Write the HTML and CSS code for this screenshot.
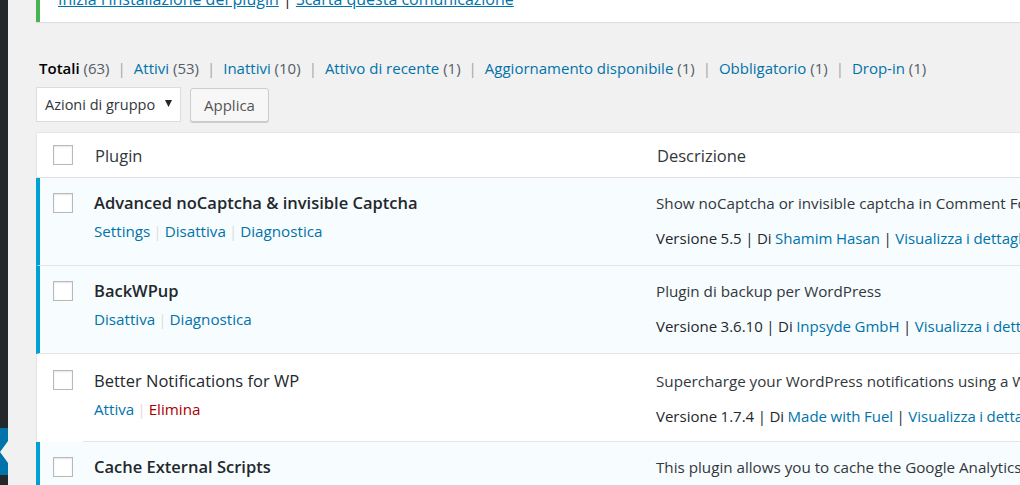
FILE: index.html
```html
<!DOCTYPE html>
<html lang="it">
<head>
<meta charset="utf-8">
<title>Plugin</title>
<link rel="stylesheet" href="styles.css">
</head>
<body>
<div class="layout">
  <aside class="sidebar">
    <div class="side-spacer"></div>
    <div class="side-current"><span class="side-arrow"></span></div>
    <div class="side-rest"></div>
  </aside>
  <main class="main">
    <div class="notice">
      <a href="#">Inizia l'installazione del plugin</a> | <a href="#">Scarta questa comunicazione</a>
    </div>

    <ul class="filters">
      <li><span class="current">Totali</span> <span class="count">(63)</span><span class="sep">|</span></li>
      <li><a href="#">Attivi <span class="count">(53)</span></a><span class="sep">|</span></li>
      <li><a href="#">Inattivi <span class="count">(10)</span></a><span class="sep">|</span></li>
      <li><a href="#">Attivo di recente <span class="count">(1)</span></a><span class="sep">|</span></li>
      <li><a href="#">Aggiornamento disponibile <span class="count">(1)</span></a><span class="sep">|</span></li>
      <li><a href="#">Obbligatorio <span class="count">(1)</span></a><span class="sep">|</span></li>
      <li><a href="#">Drop-in <span class="count">(1)</span></a></li>
    </ul>

    <div class="bulk">
      <div class="select">
        <span>Azioni di gruppo</span>
        <svg class="caret" width="7" height="7" viewBox="0 0 7 7"><path d="M0 0 H7 L3.5 7 Z" fill="#23282d"/></svg>
      </div>
      <button class="btn">Applica</button>
    </div>

    <div class="table">
      <div class="row head">
        <div class="cell check"><span class="cb"></span></div>
        <div class="cell name"><span class="th">Plugin</span></div>
        <div class="cell desc"><span class="th">Descrizione</span></div>
      </div>

      <div class="row active">
        <div class="cell check"><span class="cb"></span></div>
        <div class="cell name">
          <strong class="title">Advanced noCaptcha &amp; invisible Captcha</strong>
          <div class="actions"><a href="#">Settings</a><span class="asep">|</span><a href="#">Disattiva</a><span class="asep">|</span><a href="#">Diagnostica</a></div>
        </div>
        <div class="cell desc">
          <p class="dtext">Show noCaptcha or invisible captcha in Comment Form, Login Form, Register Form</p>
          <p class="ver">Versione 5.5 | Di <a href="#">Shamim Hasan</a> | <a href="#">Visualizza i dettagli</a></p>
        </div>
      </div>

      <div class="row active">
        <div class="cell check"><span class="cb"></span></div>
        <div class="cell name">
          <strong class="title">BackWPup</strong>
          <div class="actions"><a href="#">Disattiva</a><span class="asep">|</span><a href="#">Diagnostica</a></div>
        </div>
        <div class="cell desc">
          <p class="dtext">Plugin di backup per WordPress</p>
          <p class="ver">Versione 3.6.10 | Di <a href="#">Inpsyde GmbH</a> | <a href="#">Visualizza i dettagli</a></p>
        </div>
      </div>

      <div class="row inactive">
        <div class="cell check"><span class="cb"></span></div>
        <div class="cell name">
          <span class="title">Better Notifications for WP</span>
          <div class="actions"><a href="#">Attiva</a><span class="asep">|</span><a href="#" class="delete">Elimina</a></div>
        </div>
        <div class="cell desc">
          <p class="dtext">Supercharge your WordPress notifications using a WYSIWYG editor and shortcodes.</p>
          <p class="ver">Versione 1.7.4 | Di <a href="#">Made with Fuel</a> | <a href="#">Visualizza i dettagli</a></p>
        </div>
      </div>

      <div class="row active">
        <div class="cell check"><span class="cb"></span></div>
        <div class="cell name">
          <strong class="title">Cache External Scripts</strong>
          <div class="actions"><a href="#">Disattiva</a></div>
        </div>
        <div class="cell desc">
          <p class="dtext">This plugin allows you to cache the Google Analytics JavaScript file</p>
          <p class="ver">Versione 0.4 | Di <a href="#">Diego Voors</a></p>
        </div>
      </div>
    </div>
  </main>
</div>
</body>
</html>
```

FILE: styles.css
```css
html, body {
  margin: 0;
  padding: 0;
  height: 100%;
  overflow: hidden;
}
body {
  font-family: "Open Sans", "Noto Sans", sans-serif;
  font-size: 15px;
  color: #23282d;
  background: #f1f1f1;
}
a { color: #0073aa; text-decoration: none; }

.layout {
  display: flex;
  height: 485px;
}

.sidebar {
  width: 8px;
  flex: 0 0 8px;
  display: flex;
  flex-direction: column;
  background: #23282d;
}
.side-spacer { height: 428px; }
.side-current {
  height: 47px;
  background: #0073aa;
  display: flex;
  align-items: center;
  justify-content: flex-end;
}
.side-arrow {
  width: 0;
  height: 0;
  border-right: 8px solid #f1f1f1;
  border-top: 11px solid transparent;
  border-bottom: 11px solid transparent;
}
.side-rest { flex: 1; }

.main {
  flex: 1;
  padding-left: 28px;
  min-width: 0;
}

.notice {
  margin-top: -12px;
  background: #fff;
  border-left: 4px solid #46b450;
  box-shadow: 0 1px 1px rgba(0,0,0,.08);
  padding: 0 12px 12px 18px;
  line-height: 22px;
  font-size: 16px;
  color: #23282d;
  white-space: nowrap;
}
.notice a { text-decoration: underline; }

.filters {
  list-style: none;
  margin: 33px 0 0 3px;
  padding: 0;
  display: flex;
  line-height: 26px;
  font-size: 15px;
  color: #555d66;
  white-space: nowrap;
}
.filters .current { color: #000; font-weight: 600; }
.filters .count { color: #555d66; }
.filters .sep { color: #a0a5aa; margin: 0 8px; }

.bulk {
  display: flex;
  gap: 9px;
  margin-top: 6px;
  align-items: flex-start;
}
.select {
  width: 145px;
  height: 35px;
  box-sizing: border-box;
  background: #fff;
  border: 1px solid #ddd;
  display: flex;
  align-items: center;
  justify-content: space-between;
  padding: 0 8px 0 8px;
  font-size: 14.5px;
  color: #32373c;
}
.caret { margin-top: -2px; }
.btn {
  height: 34px;
  margin-top: 1px;
  padding: 0 13px;
  background: #f7f7f7;
  border: 1px solid #ccc;
  border-radius: 3px;
  box-shadow: 0 1px 0 #ccc;
  font-family: inherit;
  font-size: 15px;
  color: #555;
}

.table {
  margin-top: 10px;
  width: 1200px;
  background: #fff;
  border: 1px solid #e5e5e5;
  border-bottom: 0;
}
.row {
  display: grid;
  grid-template-columns: 46px 562px 1fr;
}
.row.active { background: #f7fcfe; }
.row.head { background: #fff; }
.cell { box-sizing: border-box; }

.row.head .cell { height: 45px; border-bottom: 1px solid #e1e1e1; }
.row.head .check { padding: 12px 0 0 16px; }
.row.head .th {
  display: block;
  font-size: 16.5px;
  line-height: 22px;
  padding-top: 12px;
  color: #32373c;
}
.row.head .name { padding-left: 12px; }
.row.head .desc { padding-left: 12px; }

.row:not(.head) .cell {
  height: 88px;
  border-bottom: 1px solid #e5e5e5;
}
.row.inactive .check { border-bottom-color: transparent; }
.row.active .check {
  border-left: 4px solid #00a0d2;
  margin-left: -1px;
  padding: 15px 0 0 13px;
}
.row.inactive .check { padding: 16px 0 0 16px; }

.cb {
  display: block;
  width: 20px;
  height: 20px;
  box-sizing: border-box;
  border: 1px solid #b4b9be;
  background: #fff;
  box-shadow: inset 0 1px 2px rgba(0,0,0,.1);
}

.row:not(.head) .name { padding: 14px 10px 0 11px; }
.title {
  display: block;
  font-size: 16.5px;
  line-height: 22px;
  color: #23282d;
  white-space: nowrap;
}
strong.title { font-weight: 600; }
.row.inactive .name { padding-top: 16px; }
.actions {
  margin-top: 6px;
  line-height: 22px;
  font-size: 15.2px;
  color: #ddd;
  white-space: nowrap;
}
.asep { margin: 0 3px; color: #ddd; }
.actions .delete { color: #a00; }

.row:not(.head) .desc { padding: 14px 10px 0 11px; }
.row.inactive .desc { padding-top: 16px; }
.dtext, .ver {
  margin: 0;
  line-height: 22px;
  font-size: 15.2px;
  white-space: nowrap;
  color: #32373c;
}
.ver { margin-top: 13px; color: #23282d; font-size: 15px; word-spacing: -0.4px; }
```
